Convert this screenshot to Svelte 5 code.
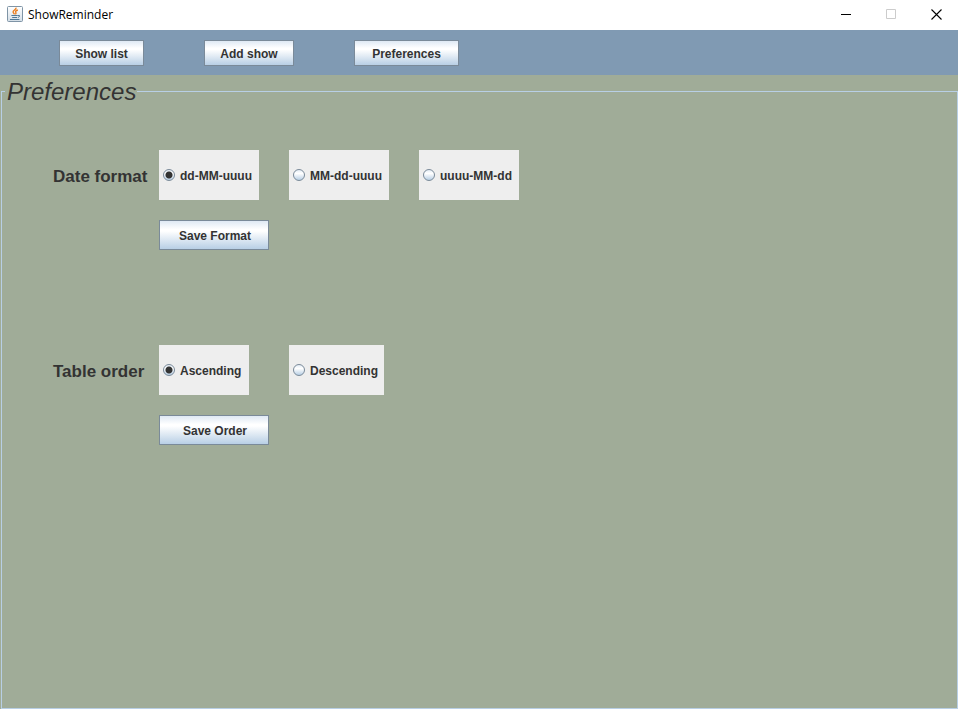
<script>
  let dateFormat = $state('dd-MM-uuuu');
  let tableOrder = $state('Ascending');
</script>

<div class="window">
  <header class="titlebar">
    <svg class="logo" width="16" height="16" viewBox="0 0 16 16" aria-hidden="true">
      <defs>
        <linearGradient id="tile" x1="0" y1="0" x2="0" y2="1">
          <stop offset="0" stop-color="#ffffff" />
          <stop offset="1" stop-color="#d3dde6" />
        </linearGradient>
      </defs>
      <rect x="0.5" y="0.5" width="15" height="15" rx="1" fill="url(#tile)" stroke="#7f94a6" />
      <path d="M9 1.6C9.6 3.6 5.9 4.3 6.1 6C6.2 6.9 7.2 7.3 7.4 8.4M10.8 4C8.9 4.7 8.2 5.4 8.8 6.3C9.2 7 9 7.7 8.4 8.4" fill="none" stroke="#ea7d1e" stroke-width="1.4" />
      <path d="M4.4 9.5H10.8M5.2 11.5H10.2M3 13.5H12.4M11 9.5H12.5V10.5L11 11.5" fill="none" stroke="#4f7896" stroke-width="1" />
    </svg>
    <span class="title">ShowReminder</span>
    <div class="controls">
      <button aria-label="Minimize">
        <svg width="11" height="11" viewBox="0 0 11 11"><path d="M0 5.5H10" stroke="#000" /></svg>
      </button>
      <button aria-label="Maximize" disabled>
        <svg width="11" height="11" viewBox="0 0 11 11"><path d="M0.5 0.5H9.5V9.5H0.5Z" fill="none" stroke="#ccc" /></svg>
      </button>
      <button aria-label="Close">
        <svg width="11" height="11" viewBox="0 0 11 11"><path d="M0.5 0.5L10.5 10.5M10.5 0.5L0.5 10.5" stroke="#000" stroke-width="1.1" /></svg>
      </button>
    </div>
  </header>

  <nav class="toolbar">
    <button class="metal show">Show list</button>
    <button class="metal add">Add show</button>
    <button class="metal prefs">Preferences</button>
  </nav>

  <main>
    <fieldset class="panel">
      <legend>Preferences</legend>

      <div class="setting">
        <span class="name" id="date-label">Date format</span>
        <div class="options" role="radiogroup" aria-labelledby="date-label">
          {#each ['dd-MM-uuuu', 'MM-dd-uuuu', 'uuuu-MM-dd'] as format}
            <label class="option date">
              <input type="radio" name="date" value={format} bind:group={dateFormat} />
              <span>{format}</span>
            </label>
          {/each}
        </div>
        <button class="metal save">Save Format</button>
      </div>

      <div class="setting">
        <span class="name" id="order-label">Table order</span>
        <div class="options order" role="radiogroup" aria-labelledby="order-label">
          <label class="option ascending">
            <input type="radio" name="order" value="Ascending" bind:group={tableOrder} />
            <span>Ascending</span>
          </label>
          <label class="option descending">
            <input type="radio" name="order" value="Descending" bind:group={tableOrder} />
            <span>Descending</span>
          </label>
        </div>
        <button class="metal save">Save Order</button>
      </div>
    </fieldset>
  </main>
</div>

<style>
  :global(body) {
    margin: 0;
  }
  .window {
    display: flex;
    flex-direction: column;
    min-height: 100vh;
    background: #a0ac98;
    color: #333;
    font: bold 12px/16px 'Liberation Sans', Arial, sans-serif;
  }
  .titlebar {
    display: flex;
    align-items: center;
    height: 30px;
    padding-left: 7px;
    background: #fff;
  }
  .logo {
    margin-bottom: 2px;
  }
  .title {
    margin-left: 5px;
    color: #000;
    font: 12px/16px 'Segoe UI', 'Open Sans', sans-serif;
  }
  .controls {
    display: flex;
    align-self: flex-start;
    margin-left: auto;
  }
  .controls button {
    display: flex;
    align-items: center;
    justify-content: center;
    width: 45px;
    height: 29px;
    padding: 0 0 0 2px;
    border: 0;
    background: none;
    box-sizing: border-box;
  }
  .toolbar {
    display: flex;
    align-items: center;
    gap: 60px;
    height: 45px;
    padding-left: 59px;
    background: #809ab3;
  }
  .metal {
    height: 30px;
    padding: 2px 0 0;
    border: 1px solid #7a8a99;
    background: linear-gradient(#dfe9f4 0%, #fff 30%, #fff 36%, #b8cfe5 100%);
    box-sizing: border-box;
    color: inherit;
    font: inherit;
  }
  .toolbar .metal {
    height: 26px;
  }
  .show {
    width: 85px;
  }
  .add {
    width: 90px;
  }
  .prefs {
    width: 105px;
  }
  main {
    display: flex;
    flex: 1;
  }
  .panel {
    flex: 1;
    min-width: 0;
    margin: 0 0 0 1px;
    padding: 42px 20px 20px 3px;
    border: 1px solid #b8cfe5;
  }
  legend {
    padding: 0 1px 0 2px;
    font: italic 24px/33px 'Liberation Sans', Arial, sans-serif;
  }
  .setting {
    display: grid;
    grid-template-columns: 106px 1fr;
    row-gap: 20px;
    align-items: center;
    margin: 0 0 95px 48px;
  }
  .name {
    padding-top: 4px;
    font-size: 17px;
    line-height: 20px;
  }
  .options {
    display: flex;
    flex-wrap: wrap;
    gap: 30px;
  }
  .order {
    gap: 40px;
  }
  .option {
    display: flex;
    align-items: center;
    gap: 5px;
    height: 50px;
    padding-left: 4px;
    background: #eee;
    box-sizing: border-box;
    white-space: nowrap;
  }
  .option span {
    padding-top: 2px;
  }
  .date {
    width: 100px;
  }
  .ascending {
    width: 90px;
  }
  .descending {
    width: 95px;
  }
  input {
    appearance: none;
    width: 12px;
    height: 12px;
    margin: 0;
    border: 1px solid #7a8a99;
    border-radius: 50%;
    background: linear-gradient(#e4edf6, #fff 35%, #b8cfe5);
    box-sizing: border-box;
  }
  input:checked {
    background:
      radial-gradient(circle, #333 3px, transparent 4px),
      linear-gradient(#e4edf6, #fff 35%, #b8cfe5);
  }
  .save {
    grid-column: 2;
    width: 110px;
    padding-left: 2px;
  }
</style>
